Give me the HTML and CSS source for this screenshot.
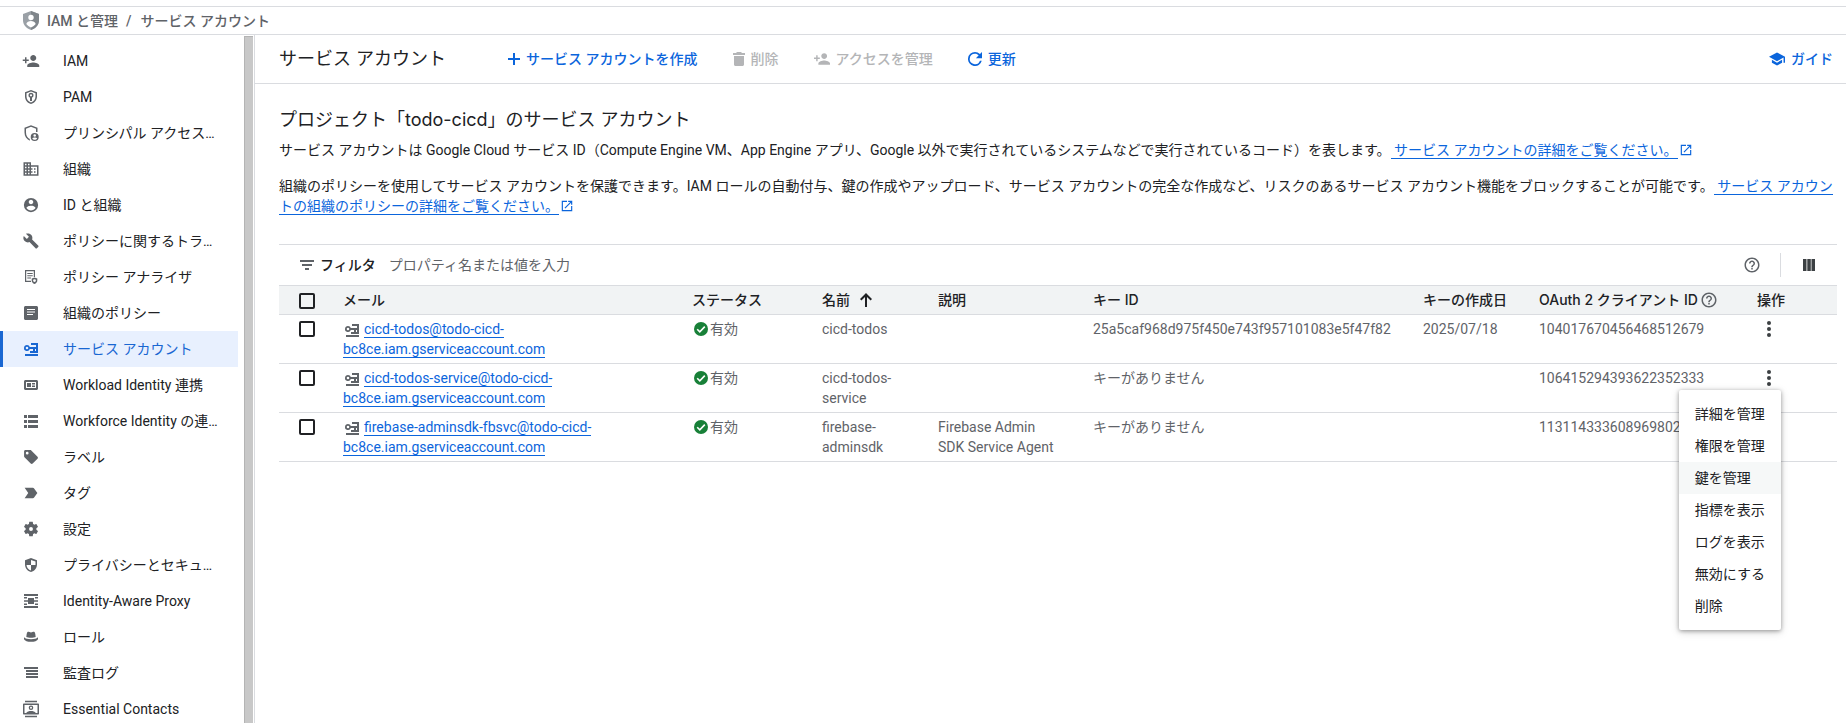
FILE: index.html
```
<!DOCTYPE html>
<html lang="ja">
<head>
    <meta charset="UTF-8">
    <meta name="viewport" content="width=device-width, initial-scale=1.0">
    <title>サービス アカウント</title>
    <link rel="stylesheet" href="styles.css">
</head>
<body>
    <svg class="sprite" aria-hidden="true">
        <symbol id="i-person-add" viewBox="0 0 24 24"><path d="M15 12c2.21 0 4-1.79 4-4s-1.79-4-4-4-4 1.79-4 4 1.79 4 4 4zm-9-2V7H4v3H1v2h3v3h2v-3h3v-2H6zm9 4c-2.67 0-8 1.34-8 4v2h16v-2c0-2.66-5.33-4-8-4z"/></symbol>
        <symbol id="i-key" viewBox="0 0 18 18"><path fill-rule="evenodd" d="M5 5a3 3 0 0 1 2.83 2H14v2h-1v2h-2V9H7.83A3 3 0 1 1 5 5zm0 1.7a1.3 1.3 0 1 0 0 2.6 1.3 1.3 0 0 0 0-2.6z"/><path d="M9 3h7v10H8v-2h6V5H9zM3 14h13v2H3z"/></symbol>
        <symbol id="i-help" viewBox="0 0 24 24"><path d="M11 18h2v-2h-2v2zm1-16C6.48 2 2 6.48 2 12s4.48 10 10 10 10-4.48 10-10S17.52 2 12 2zm0 18c-4.41 0-8-3.59-8-8s3.59-8 8-8 8 3.59 8 8-3.59 8-8 8zm0-14c-2.21 0-4 1.79-4 4h2c0-1.1.9-2 2-2s2 .9 2 2c0 2-3 1.75-3 5h2c0-2.25 3-2.5 3-5 0-2.21-1.79-4-4-4z"/></symbol>
        <symbol id="i-check" viewBox="0 0 14 14"><circle cx="7" cy="7" r="7"/><path class="tick" d="M3.2 7.2l2.6 2.6 5-5.2"/></symbol>
        <symbol id="i-more" viewBox="0 0 24 24"><circle cx="12" cy="4" r="2.7"/><circle cx="12" cy="12" r="2.7"/><circle cx="12" cy="20" r="2.7"/></symbol>
        <symbol id="i-open" viewBox="0 0 24 24"><path d="M19 19H5V5h7V3H3v18h18v-9h-2v7zM14 3v2h3.59l-9.83 9.83 1.41 1.41L19 6.41V10h2V3h-7z"/></symbol>
    </svg>

    <header class="breadcrumb">
        <svg class="logo" viewBox="0 0 16 19"><path fill="#9aa0a6" d="M8 0l8 3v6c0 5-3.4 8.6-8 10C3.4 17.6 0 14 0 9V3z"/><path fill="#80868b" d="M8 0l8 3v6c0 5-3.4 8.6-8 10z"/><circle cx="8" cy="6.5" r="2.7" fill="#fff"/><path fill="#fff" d="M3.3 13c.3-2 2.7-3 4.7-3s4.4 1 4.7 3c-1.2 1.6-2.7 2.7-4.7 3.4-2-.7-3.5-1.8-4.7-3.4z"/></svg>
        <a href="#">IAM と管理</a>
        <span class="slash">/</span>
        <span>サービス アカウント</span>
    </header>

    <div class="layout">
        <aside class="sidebar">
            <nav class="side-nav">
                <a href="#"><svg viewBox="0 0 24 24"><use href="#i-person-add"/></svg>IAM</a>
                <a href="#"><svg viewBox="0 0 18 18"><path fill-rule="evenodd" d="M9 2l6 2.2v4.3c0 3.7-2.5 6.5-6 7.5-3.5-1-6-3.8-6-7.5V4.2zm0 1.6L4.5 5.2v3.3c0 2.9 1.8 5 4.5 5.9 2.7-.9 4.5-3 4.5-5.9V5.2z"/><path fill-rule="evenodd" d="M9 4.7a2.6 2.6 0 0 1 1 5v3.3H8V9.7a2.6 2.6 0 0 1 1-5zm0 1.5a1.1 1.1 0 1 0 0 2.2 1.1 1.1 0 0 0 0-2.2z"/></svg>PAM</a>
                <a href="#"><svg viewBox="0 0 18 18"><path d="M9 1.2l6.5 2.5V8H14V4.7L9 2.8 4 4.7v3.8c0 3.2 1.5 5.4 3.8 6.5v1.7C4.6 15.3 2.5 12.3 2.5 8.5V3.7z"/><path fill-rule="evenodd" d="M12.7 9a4 4 0 1 1 0 8 4 4 0 0 1 0-8zm0 1.2a1.3 1.3 0 1 0 0 2.6 1.3 1.3 0 0 0 0-2.6zm-2.4 4.2c.6.9 1.4 1.4 2.4 1.4s1.8-.5 2.4-1.4c-.4-.7-1.5-.9-2.4-.9s-2 .2-2.4.9z"/></svg>プリンシパル アクセス…</a>
                <a href="#"><svg viewBox="0 0 24 24"><path d="M12 7V3H2v18h20V7H12zM6 19H4v-2h2v2zm0-4H4v-2h2v2zm0-4H4V9h2v2zm0-4H4V5h2v2zm4 12H8v-2h2v2zm0-4H8v-2h2v2zm0-4H8V9h2v2zm0-4H8V5h2v2zm10 12h-8v-2h2v-2h-2v-2h2v-2h-2V9h8v10zm-2-8h-2v2h2v-2zm0 4h-2v2h2v-2z"/></svg>組織</a>
                <a href="#"><svg viewBox="0 0 24 24"><path d="M12 2.5a9.5 9.5 0 1 0 0 19 9.5 9.5 0 0 0 0-19zM12 5c1.66 0 3 1.34 3 3s-1.34 3-3 3-3-1.34-3-3 1.34-3 3-3zm0 14.2c-2.5 0-4.71-1.28-6-3.22.03-1.99 4-3.08 6-3.08 1.99 0 5.97 1.09 6 3.08-1.29 1.94-3.5 3.22-6 3.22z"/></svg>ID と組織</a>
                <a href="#"><svg viewBox="-1 -1 26 26"><path d="M22.7 19l-9.1-9.1c.9-2.3.4-5-1.5-6.9-2-2-5-2.4-7.4-1.3L9 6 6 9 1.6 4.7C.4 7.1.9 10.1 2.9 12.1c1.9 1.9 4.6 2.4 6.9 1.5l9.1 9.1c.4.4 1 .4 1.4 0l2.3-2.3c.5-.4.5-1.1.1-1.4z"/></svg>ポリシーに関するトラ…</a>
                <a href="#"><svg viewBox="0 0 18 18"><path d="M3 2h10v7h-1.2V3.2H4.2v9.6H9V14H3z"/><path d="M5.3 5h5.4v1H5.3zM5.3 7.3h5.4v1H5.3zM5.3 9.6H9v1H5.3z"/><path fill-rule="evenodd" d="M12.5 9.5l2.8.9v2.2c0 1.6-1.1 2.9-2.8 3.4-1.7-.5-2.8-1.8-2.8-3.4v-2.2zm0 1.7a1.4 1.4 0 1 0 0 2.8 1.4 1.4 0 0 0 0-2.8z"/></svg>ポリシー アナライザ</a>
                <a href="#"><svg viewBox="0 0 18 18"><path fill-rule="evenodd" d="M3.5 2h11c.8 0 1.5.7 1.5 1.5v11c0 .8-.7 1.5-1.5 1.5h-11c-.8 0-1.5-.7-1.5-1.5v-11C2 2.7 2.7 2 3.5 2zM5 5v1h8V5zm0 2.500v1h8v-1zM5 10v1h6v-1z"/></svg>組織のポリシー</a>
                <a href="#" class="active"><svg viewBox="0 0 18 18"><use href="#i-key"/></svg>サービス アカウント</a>
                <a href="#"><svg viewBox="0 0 18 18"><path fill-rule="evenodd" d="M3.5 4h11c.8 0 1.5.7 1.5 1.5v7c0 .8-.7 1.5-1.5 1.5h-11c-.8 0-1.5-.7-1.5-1.5v-7C2 4.7 2.7 4 3.5 4zM4 6v6h10V6z"/><path d="M5 7h4v4H5zM10 7h3v1.5h-3zM10 9.5h3V11h-3z"/></svg>Workload Identity 連携</a>
                <a href="#"><svg viewBox="0 0 18 18"><path d="M2 3h3v3H2zM6 3h10v3H6zM2 8h3v3H2zM6 8h10v3H6zM2 13h3v3H2zM6 13h10v3H6z"/></svg>Workforce Identity の連…</a>
                <a href="#"><svg viewBox="-1 -1 26 26"><path d="M21.41 11.58l-9-9C12.05 2.22 11.55 2 11 2H4c-1.1 0-2 .9-2 2v7c0 .55.22 1.05.59 1.42l9 9c.36.36.86.58 1.41.58.55 0 1.05-.22 1.41-.59l7-7c.37-.36.59-.86.59-1.41 0-.55-.23-1.06-.59-1.42zM6.5 8.5a2 2 0 1 1 0-4 2 2 0 0 1 0 4z"/></svg>ラベル</a>
                <a href="#"><svg viewBox="0 0 24 24"><path d="M3.5 18.99l11 .01c.67 0 1.27-.33 1.63-.84L20.5 12l-4.37-6.16c-.36-.51-.96-.84-1.63-.84l-11 .01L8.34 12 3.5 18.99z"/></svg>タグ</a>
                <a href="#"><svg viewBox="0 0 24 24"><path d="M19.14 12.94c.04-.3.06-.61.06-.94 0-.32-.02-.64-.07-.94l2.03-1.58c.18-.14.23-.41.12-.61l-1.92-3.32c-.12-.22-.37-.29-.59-.22l-2.39.96c-.5-.38-1.03-.7-1.62-.94l-.36-2.54c-.04-.24-.24-.41-.48-.41h-3.84c-.24 0-.43.17-.47.41l-.36 2.54c-.59.24-1.13.57-1.62.94l-2.39-.96c-.22-.08-.47 0-.59.22L2.74 8.87c-.12.21-.08.47.12.61l2.03 1.58c-.05.3-.09.63-.09.94s.02.64.07.94l-2.03 1.58c-.18.14-.23.41-.12.61l1.92 3.32c.12.22.37.29.59.22l2.39-.96c.5.38 1.03.7 1.62.94l.36 2.54c.05.24.24.41.48.41h3.84c.24 0 .44-.17.47-.41l.36-2.54c.59-.24 1.13-.56 1.62-.94l2.39.96c.22.08.47 0 .59-.22l1.92-3.32c.12-.22.07-.47-.12-.61l-2.01-1.58zM12 14.6a2.6 2.6 0 1 1 0-5.2 2.6 2.6 0 0 1 0 5.2z"/></svg>設定</a>
                <a href="#"><svg viewBox="0 0 18 18"><path fill-rule="evenodd" d="M9 2l6 2.2v4.3c0 3.7-2.5 6.5-6 7.5-3.5-1-6-3.8-6-7.5V4.2zm0 2v5h4.5V5.5zM9 9H4.5c.3 2.7 2 4.7 4.5 5.5z"/></svg>プライバシーとセキュ…</a>
                <a href="#"><svg viewBox="0 0 18 18"><path d="M2 2h14v2H2zM2 14h14v2H2zM2 5h3v1.5H2zM13 5h3v1.5h-3zM2 11.5h3V13H2zM13 11.5h3V13h-3zM6 6h6v6H6zM2 8.2h14v1.6H2z"/></svg>Identity-Aware Proxy</a>
                <a href="#"><svg viewBox="0 0 18 18"><path d="M5.5 4c1.2-.6 2 .4 3.5.4S11.300 3.4 12.5 4c.7.4 1 3.5 1.2 5-2 1-7.4 1-9.4 0 .2-1.5.5-4.6 1.2-5zM2 9.2c1 .5 1.6 1.3 2.7 1.6 2.5.6 6.1.6 8.6 0 1.1-.3 1.7-1.1 2.700-1.6v2c-.8 1.7-3.5 2.6-7 2.6s-6.2-.9-7-2.6z"/></svg>ロール</a>
                <a href="#"><svg viewBox="0 0 18 18"><path d="M2 3h14v2H2zM4 6h12v2H4zM4 9h12v2H4zM4 12h12v2H4z"/></svg>監査ログ</a>
                <a href="#"><svg viewBox="0 0 18 18"><path fill-rule="evenodd" d="M3 .8h12v1.4H3zM3 15.8h12v1.4H3zM2 3.5h14c.6 0 1 .4 1 1v9c0 .6-.4 1-1 1H2c-.6 0-1-.4-1-1v-9c0-.6.4-1 1-1zM2.5 5v8h1.7c.9-1.5 2.8-2 4.8-2s3.9.5 4.8 2h1.7V5z"/><path fill-rule="evenodd" d="M9 5.5a2.3 2.3 0 1 1 0 4.6 2.3 2.3 0 0 1 0-4.6zm0 1.3a1 1 0 1 0 0 2 1 1 0 0 0 0-2z"/></svg>Essential Contacts</a>
            </nav>
            <div class="scrollbar"></div>
        </aside>

        <main class="main">
            <div class="page-bar">
                <h1>サービス アカウント</h1>
                <div class="actions">
                    <button type="button"><svg class="i12" viewBox="0 0 12 12"><path d="M5 0h2v5h5v2H7v5H5V7H0V5h5z"/></svg>サービス アカウントを作成</button>
                    <button type="button" disabled><svg class="i12" viewBox="0 0 12 14"><path d="M4 0h4l1 1h3v2H0V1h3zM1 4h10v8.5c0 .8-.7 1.5-1.5 1.5h-7c-.8 0-1.5-.7-1.5-1.5z"/></svg>削除</button>
                    <button type="button" disabled><svg class="i16" viewBox="1 1 22 22"><use href="#i-person-add" width="24" height="24"/></svg>アクセスを管理</button>
                    <button type="button"><svg class="i14" viewBox="4 4 16 16"><path d="M17.65 6.35A7.958 7.958 0 0 0 12 4a8 8 0 1 0 7.73 10h-2.08A6 6 0 1 1 12 6c1.66 0 3.14.69 4.22 1.78L13 11h7V4l-2.35 2.35z"/></svg>更新</button>
                </div>
                <button type="button" class="guide"><svg class="i16" viewBox="1 1 22 22"><path d="M5 13.18v4L12 21l7-3.82v-4L12 17l-7-3.82zM12 3L1 9l11 6 9-4.91V17h2V9L12 3z"/></svg>ガイド</button>
            </div>

            <div class="content">
                <h2>プロジェクト「todo-cicd」のサービス アカウント</h2>
                <p>サービス アカウントは Google Cloud サービス ID（Compute Engine VM、App Engine アプリ、Google 以外で実行されているシステムなどで実行されているコード）を表します。<a href="#" class="link"> サービス アカウントの詳細をご覧ください。</a><svg class="open" viewBox="0 0 24 24"><use href="#i-open"/></svg></p>
                <p>組織のポリシーを使用してサービス アカウントを保護できます。IAM ロールの自動付与、鍵の作成やアップロード、サービス アカウントの完全な作成など、リスクのあるサービス アカウント機能をブロックすることが可能です。<a href="#" class="link"> サービス アカウントの組織のポリシーの詳細をご覧ください。</a><svg class="open" viewBox="0 0 24 24"><use href="#i-open"/></svg></p>

                <div class="filter-bar">
                    <svg class="i14" viewBox="0 0 14 14"><path d="M0 2h14v2H0zM2 6h10v2H2zM5 10h4v2H5z"/></svg>
                    <label for="filter">フィルタ</label>
                    <input type="text" id="filter" placeholder="プロパティ名または値を入力">
                    <button type="button" class="icon-btn help" aria-label="ヘルプ"><svg class="i18" viewBox="0 0 24 24"><use href="#i-help"/></svg></button>
                    <span class="divider"></span>
                    <button type="button" class="icon-btn" aria-label="表示列"><svg class="i12" viewBox="0 0 12 12"><path d="M0 0h3.5v12H0zM4.300 0h3.5v12H4.3zM8.5 0H12v12H8.5z"/></svg></button>
                </div>

                <table class="accounts">
                    <colgroup>
                        <col class="c-check"><col class="c-mail"><col class="c-status"><col class="c-name"><col class="c-desc"><col class="c-key"><col class="c-date"><col class="c-oauth"><col class="c-ops">
                    </colgroup>
                    <thead>
                        <tr>
                            <th class="check"><input type="checkbox" aria-label="すべて選択"></th>
                            <th>メール</th>
                            <th>ステータス</th>
                            <th>名前<svg class="sort" viewBox="0 0 12 14"><path d="M5 14V4L1.4 7.500 0 6l6-6 6 6-1.400 1.500L7 4v10z"/></svg></th>
                            <th>説明</th>
                            <th>キー ID</th>
                            <th>キーの作成日</th>
                            <th class="with-help">OAuth 2 クライアント ID<svg class="i18" viewBox="0 0 24 24"><use href="#i-help"/></svg></th>
                            <th>操作</th>
                        </tr>
                    </thead>
                    <tbody>
                        <tr>
                            <td class="check"><input type="checkbox" aria-label="cicd-todos"></td>
                            <td><svg class="key" viewBox="0 0 18 18"><use href="#i-key"/></svg><a href="#" class="link">cicd-todos@todo-cicd-bc8ce.iam.gserviceaccount.com</a></td>
                            <td><svg class="ok" viewBox="0 0 14 14"><use href="#i-check"/></svg>有効</td>
                            <td>cicd-todos</td>
                            <td></td>
                            <td>25a5caf968d975f450e743f957101083e5f47f82</td>
                            <td>2025/07/18</td>
                            <td>104017670456468512679</td>
                            <td><button type="button" class="more" aria-label="操作"><svg class="i18" viewBox="0 0 24 24"><use href="#i-more"/></svg></button></td>
                        </tr>
                        <tr>
                            <td class="check"><input type="checkbox" aria-label="cicd-todos-service"></td>
                            <td><svg class="key" viewBox="0 0 18 18"><use href="#i-key"/></svg><a href="#" class="link">cicd-todos-service@todo-cicd-bc8ce.iam.gserviceaccount.com</a></td>
                            <td><svg class="ok" viewBox="0 0 14 14"><use href="#i-check"/></svg>有効</td>
                            <td>cicd-todos-service</td>
                            <td></td>
                            <td>キーがありません</td>
                            <td></td>
                            <td>106415294393622352333</td>
                            <td>
                                <div class="ops">
                                    <button type="button" class="more" aria-label="操作"><svg class="i18" viewBox="0 0 24 24"><use href="#i-more"/></svg></button>
                                    <div class="menu">
                                        <button type="button">詳細を管理</button>
                                        <button type="button">権限を管理</button>
                                        <button type="button" class="hover">鍵を管理</button>
                                        <button type="button">指標を表示</button>
                                        <button type="button">ログを表示</button>
                                        <button type="button">無効にする</button>
                                        <button type="button">削除</button>
                                    </div>
                                </div>
                            </td>
                        </tr>
                        <tr>
                            <td class="check"><input type="checkbox" aria-label="firebase-adminsdk"></td>
                            <td><svg class="key" viewBox="0 0 18 18"><use href="#i-key"/></svg><a href="#" class="link">firebase-adminsdk-fbsvc@todo-cicd-bc8ce.iam.gserviceaccount.com</a></td>
                            <td><svg class="ok" viewBox="0 0 14 14"><use href="#i-check"/></svg>有効</td>
                            <td>firebase-adminsdk</td>
                            <td>Firebase Admin SDK Service Agent</td>
                            <td>キーがありません</td>
                            <td></td>
                            <td>113114333608969802</td>
                            <td></td>
                        </tr>
                    </tbody>
                </table>
            </div>
        </main>
    </div>
</body>
</html>
```
FILE: styles.css
```
* {
    box-sizing: border-box;
}
body {
    font-family: Roboto, "Noto Sans CJK JP", sans-serif;
    font-size: 14px;
    line-height: 20px;
    color: #202124;
    background-color: #fff;
    margin: 0;
    height: 100vh;
    display: flex;
    flex-direction: column;
    overflow: hidden;
}
.sprite {
    display: none;
}
svg {
    fill: currentColor;
    flex-shrink: 0;
}
button,
input {
    font: inherit;
    color: inherit;
    background: none;
    border: none;
    margin: 0;
    padding: 0;
}
button {
    cursor: pointer;
}
.i12 {
    width: 12px;
    height: 14px;
}
.i14 {
    width: 14px;
    height: 14px;
}
.i16 {
    width: 16px;
    height: 16px;
}
.i18 {
    width: 18px;
    height: 18px;
}

/* breadcrumb */
.breadcrumb {
    display: flex;
    align-items: center;
    height: 29px;
    margin-top: 6px;
    padding-left: 23px;
    border-top: 1px solid #dadce0;
    border-bottom: 1px solid #dadce0;
    color: #5f6368;
    font-weight: 500;
}
.breadcrumb a {
    color: inherit;
    text-decoration: none;
}
.logo {
    width: 16px;
    height: 19px;
    margin-right: 8px;
}
.slash {
    margin: 0 9px 0 8px;
}

.layout {
    display: flex;
    flex: 1;
    min-height: 0;
}

/* sidebar */
.sidebar {
    display: flex;
    flex-shrink: 0;
    width: 255px;
    border-right: 1px solid #dadce0;
}
.side-nav {
    width: 238px;
    padding-top: 8px;
    overflow: hidden;
}
.side-nav a {
    display: flex;
    align-items: center;
    gap: 23px;
    height: 36px;
    padding-left: 19px;
    border-left: 3px solid transparent;
    color: #202124;
    text-decoration: none;
    white-space: nowrap;
}
.side-nav svg {
    width: 18px;
    height: 18px;
    color: #5f6368;
}
.side-nav .active {
    background-color: #e8f0fe;
    border-left-color: #1967d2;
    color: #1967d2;
}
.side-nav .active svg {
    color: #1967d2;
}
.scrollbar {
    width: 9px;
    margin: 1px 0 0 6px;
    background-color: #c8c8c8;
    border-left: 1px solid #b4b4b4;
    border-top: 1px solid #b4b4b4;
}

/* page header */
.main {
    flex: 1;
    min-width: 0;
}
.page-bar {
    display: flex;
    align-items: center;
    height: 49px;
    padding: 0 13px 0 24px;
    border-bottom: 1px solid #dadce0;
}
h1,
h2 {
    font-family: Inter, "Noto Sans CJK JP", sans-serif;
    font-size: 18px;
    font-weight: 400;
    line-height: 24px;
    margin: 0;
}
.actions {
    display: flex;
    gap: 35px;
    margin-left: 62px;
}
.page-bar button {
    display: flex;
    align-items: center;
    gap: 6px;
    color: #0b65dc;
    font-weight: 500;
}
.page-bar button:disabled {
    color: #b4b5b7;
    cursor: default;
}
.page-bar .guide {
    margin-left: auto;
}

/* content */
.content {
    padding: 24px 9px 0 24px;
}
h2 {
    margin-bottom: 8px;
}
p {
    margin: 0 0 16px;
}
.link {
    color: #0b65dc;
    text-decoration: none;
    border-bottom: 1px solid #0b65dc;
}
.open {
    width: 14px;
    height: 14px;
    margin-left: 1px;
    color: #0b65dc;
    vertical-align: -2px;
}

.filter-bar {
    display: flex;
    align-items: center;
    height: 41px;
    margin-top: 28px;
    padding: 0 22px 0 21px;
    border-top: 1px solid #dadce0;
    color: #5f6368;
}
.filter-bar label {
    margin: 0 13px 0 6px;
    color: #202124;
    font-weight: 500;
}
.filter-bar input {
    flex: 1;
    color: #202124;
    outline: none;
}
.filter-bar input::placeholder {
    color: #5f6368;
    opacity: 1;
}
.icon-btn {
    display: flex;
    color: #3c4043;
}
.help {
    color: #5f6368;
}
.divider {
    width: 1px;
    height: 24px;
    margin: 0 22px 0 19px;
    background-color: #dadce0;
}

/* table */
.accounts {
    width: 100%;
    table-layout: fixed;
    border-collapse: separate;
    border-spacing: 0;
    border-top: 1px solid #dadce0;
}
.c-check {
    width: 48px;
}
.c-status {
    width: 130px;
}
.c-name,
.c-date {
    width: 116px;
}
.c-desc {
    width: 155px;
}
.c-key {
    width: 330px;
}
.c-oauth {
    width: 218px;
}
.c-ops {
    width: 96px;
}
.accounts th,
.accounts td {
    padding: 4px 16px;
    border-bottom: 1px solid #dadce0;
    text-align: left;
    vertical-align: top;
}
.accounts th {
    background-color: #f1f3f4;
    font-family: Inter, "Noto Sans CJK JP", sans-serif;
    font-weight: 500;
    white-space: nowrap;
}
.accounts td {
    height: 49px;
    color: #5f6368;
}
.accounts .check {
    padding: 6px 0 0 20px;
}
.accounts th.check {
    padding-top: 7px;
}
.check input {
    display: block;
    appearance: none;
    width: 16px;
    height: 16px;
    border: 2px solid #202124;
    border-radius: 2px;
}
.sort {
    width: 12px;
    height: 14px;
    margin-left: 10px;
    vertical-align: -2px;
}
.with-help svg {
    margin-left: 2px;
    color: #5f6368;
    vertical-align: -4px;
}
.key {
    width: 18px;
    height: 18px;
    margin-right: 3px;
    vertical-align: -5px;
}
.ok {
    width: 14px;
    height: 14px;
    margin: 0 2px;
    color: #188038;
    vertical-align: -2px;
}
.tick {
    fill: none;
    stroke: #fff;
    stroke-width: 1.6;
}
.ops {
    position: relative;
}
.more {
    display: flex;
    width: 24px;
    height: 20px;
    align-items: center;
    justify-content: center;
    color: #3c4043;
}
.menu {
    position: absolute;
    top: 22px;
    right: 40px;
    z-index: 1;
    padding: 8px 0;
    background-color: #fff;
    border-radius: 2px;
    box-shadow: 0 1px 4px rgba(0, 0, 0, 0.35), 0 2px 10px rgba(0, 0, 0, 0.15);
}
.menu button {
    display: block;
    width: 100%;
    height: 32px;
    padding: 0 16px;
    color: #202124;
    text-align: left;
    white-space: nowrap;
}
.menu .hover,
.menu button:hover {
    background-color: #f6f8f8;
}
```
